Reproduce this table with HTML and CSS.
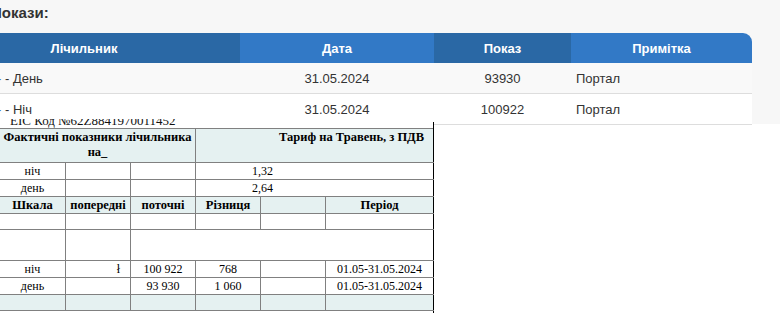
FILE: index.html
```html
<!DOCTYPE html>
<html lang="uk">
<head>
  <meta charset="UTF-8">
  <meta name="viewport" content="width=device-width, initial-scale=1.0">
  <title>Покази лічильника</title>
  <link rel="stylesheet" href="styles.css">
</head>
<body>
  <div class="readings">
    <h3 class="readings-title">Покази:</h3>

    <table class="readings-table">
      <colgroup>
        <col class="w-meter">
        <col class="w-date">
        <col class="w-value">
        <col class="w-note">
      </colgroup>
      <thead>
        <tr>
          <th>Лічильник</th>
          <th>Дата</th>
          <th>Показ</th>
          <th>Примітка</th>
        </tr>
      </thead>
      <tbody>
        <tr>
          <td class="meter"><a href="#">-</a> - День</td>
          <td class="center">31.05.2024</td>
          <td class="center">93930</td>
          <td>Портал</td>
        </tr>
        <tr>
          <td class="meter"><a href="#">-</a> - Ніч</td>
          <td class="center">31.05.2024</td>
          <td class="center">100922</td>
          <td>Портал</td>
        </tr>
      </tbody>
    </table>
  </div>

  <!-- скан рахунку, вставлений поверх таблиці -->
  <div class="scan">
    <div class="scan-caption">ЕІС Код №62Z8841970011452</div>
    <div class="scan-sheet">
      <table class="bill">
        <colgroup>
          <col class="c1">
          <col class="c2">
          <col class="c3">
          <col class="c4">
          <col class="c5">
          <col class="c6">
        </colgroup>
        <tr class="h-head">
          <th colspan="3" class="fill">Фактичні показники лічильника на_</th>
          <th colspan="3" class="fill tariff">Тариф на Травень, з ПДВ</th>
        </tr>
        <tr class="h-row">
          <td class="center">ніч</td>
          <td></td>
          <td></td>
          <td colspan="3" class="rate">1,32</td>
        </tr>
        <tr class="h-row">
          <td class="center">день</td>
          <td></td>
          <td></td>
          <td colspan="3" class="rate">2,64</td>
        </tr>
        <tr class="h-row">
          <th class="fill">Шкала</th>
          <th class="fill">попередні</th>
          <th class="fill">поточні</th>
          <th class="fill">Різниця</th>
          <th class="fill dark-l"></th>
          <th class="fill">Період</th>
        </tr>
        <tr class="h-thin">
          <td></td>
          <td></td>
          <td></td>
          <td></td>
          <td class="dark-l"></td>
          <td></td>
        </tr>
        <tr class="h-tall">
          <td></td>
          <td></td>
          <td colspan="4"></td>
        </tr>
        <tr class="h-row">
          <td class="center">ніч</td>
          <td class="mark">ł</td>
          <td class="center">100 922</td>
          <td class="center dark-l">768</td>
          <td class="dark-l"></td>
          <td class="center">01.05-31.05.2024</td>
        </tr>
        <tr class="h-row">
          <td class="center">день</td>
          <td></td>
          <td class="center">93 930</td>
          <td class="center dark-l">1 060</td>
          <td class="dark-l"></td>
          <td class="center">01.05-31.05.2024</td>
        </tr>
        <tr class="h-thin">
          <td class="fill"></td>
          <td class="fill"></td>
          <td class="fill"></td>
          <td class="fill dark-l"></td>
          <td class="fill dark-l"></td>
          <td class="fill"></td>
        </tr>
      </table>
    </div>
  </div>
</body>
</html>
```

FILE: styles.css
```css
body {
  margin: 0;
  font-family: "Liberation Sans", Arial, sans-serif;
  background: #ffffff;
  color: #333333;
}

/* блок з показами */
.readings {
  background: #f7f7f7;
  height: 124px;
}

.readings-title {
  margin: 0 0 11px -9px;
  padding-top: 4px;
  font-size: 15px;
  line-height: 18px;
  font-weight: bold;
  color: #333333;
}

.readings-table {
  margin-left: -72px;
  width: 824px;
  table-layout: fixed;
  border-collapse: separate;
  border-spacing: 0;
  font-size: 13px;
}

.w-meter { width: 312px; }
.w-date { width: 194px; }
.w-value { width: 137px; }
.w-note { width: 181px; }

.readings-table thead tr {
  height: 30px;
}

.readings-table th {
  padding: 0;
  color: #ffffff;
  font-weight: bold;
  text-align: center;
  background-color: #3279c6;
}

.readings-table th:nth-child(odd) {
  background-color: #2a68a5;
}

.readings-table th:last-child {
  border-top-right-radius: 9px;
}

.readings-table tbody tr {
  height: 31px;
}

.readings-table td {
  padding: 0 5px;
  border-bottom: 1px solid #dddddd;
  background: #ffffff;
  color: #333333;
}

.readings-table tbody tr:nth-child(odd) td {
  background: #f9f9f9;
}

.readings-table td.meter {
  padding-left: 69px;
}

.readings-table td.meter a {
  color: #3279c6;
  text-decoration: none;
}

.center {
  text-align: center;
}

/* скан рахунку лежить поверх нижнього рядка таблиці */
.scan {
  position: relative;
  margin-top: -5px;
  width: 434px;
  overflow: hidden;
  background: #ffffff;
}

.scan-caption {
  height: 6px;
  margin-top: -6px;
  padding: 0 0 0 10px;
  font-family: "Liberation Serif", "Times New Roman", serif;
  font-size: 13px;
  line-height: 15px;
  color: #111111;
}

.scan-sheet {
  margin-top: 3px;
  padding: 6px 0 2px;
  border-right: 1px solid #000000;
}

.bill {
  margin-left: -1px;
  width: 434px;
  table-layout: fixed;
  border-collapse: collapse;
  font-family: "Liberation Serif", "Times New Roman", serif;
  font-size: 12px;
  line-height: 15px;
  color: #000000;
}

.bill .c1 { width: 66px; }
.bill .c2 { width: 65px; }
.bill .c3 { width: 65px; }
.bill .c4 { width: 65px; }
.bill .c5 { width: 65px; }
.bill .c6 { width: 108px; }

.bill th,
.bill td {
  padding: 0 3px;
  border: 1px solid #808080;
  white-space: nowrap;
  overflow: hidden;
}

.bill th {
  padding: 0 2px;
  font-size: 12.5px;
  font-weight: bold;
  text-align: center;
}

.bill tr > :last-child {
  border-right-color: #000000;
}

.bill .fill {
  background: #e5f1f1;
}

.bill .dark-l {
  border-left-color: #000000;
}

.bill .h-head { height: 34px; }
.bill .h-row { height: 17px; }
.bill .h-thin { height: 16px; }
.bill .h-tall { height: 31px; }

.bill .h-head th {
  vertical-align: top;
  padding-top: 1px;
  white-space: normal;
}

.bill .h-head th.tariff {
  text-align: right;
  padding-right: 9px;
}

.bill .rate {
  padding-left: 56px;
}

.bill .mark {
  text-align: right;
  padding-right: 10px;
}
```
